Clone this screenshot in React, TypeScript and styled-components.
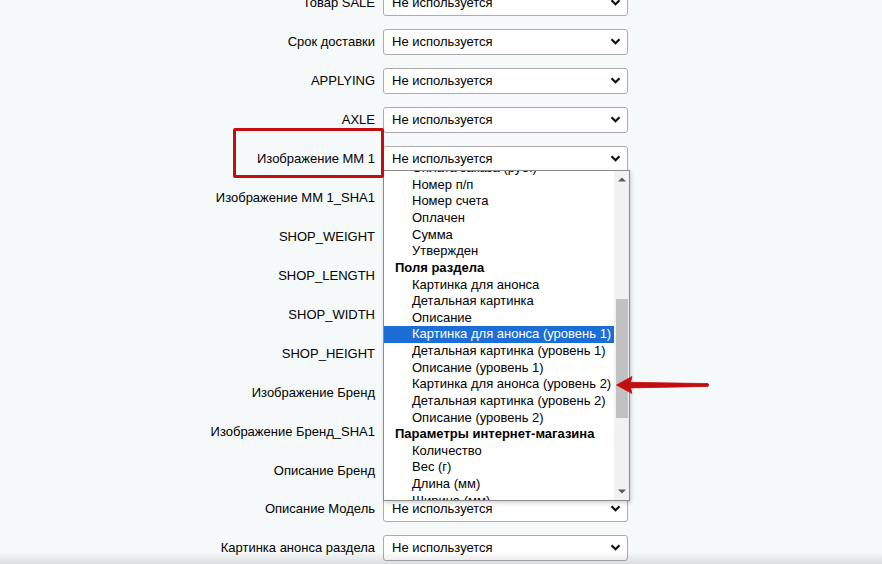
import styled, { createGlobalStyle } from "styled-components";

const GlobalStyle = createGlobalStyle`
  html, body {
    margin: 0;
    padding: 0;
  }
  body {
    background: #f5f9fa;
    font-family: "Liberation Sans", Arial, sans-serif;
    font-size: 13px;
    color: #000;
  }
`;

const fields = [
  "Товар SALE",
  "Срок доставки",
  "APPLYING",
  "AXLE",
  "Изображение MM 1",
  "Изображение MM 1_SHA1",
  "SHOP_WEIGHT",
  "SHOP_LENGTH",
  "SHOP_WIDTH",
  "SHOP_HEIGHT",
  "Изображение Бренд",
  "Изображение Бренд_SHA1",
  "Описание Бренд",
  "Описание Модель",
  "Картинка анонса раздела",
];

type Item = { text: string; group?: boolean; selected?: boolean };

const items: Item[] = [
  { text: "Оплата заказа (руб.)" },
  { text: "Номер п/п" },
  { text: "Номер счета" },
  { text: "Оплачен" },
  { text: "Сумма" },
  { text: "Утвержден" },
  { text: "Поля раздела", group: true },
  { text: "Картинка для анонса" },
  { text: "Детальная картинка" },
  { text: "Описание" },
  { text: "Картинка для анонса (уровень 1)", selected: true },
  { text: "Детальная картинка (уровень 1)" },
  { text: "Описание (уровень 1)" },
  { text: "Картинка для анонса (уровень 2)" },
  { text: "Детальная картинка (уровень 2)" },
  { text: "Описание (уровень 2)" },
  { text: "Параметры интернет-магазина", group: true },
  { text: "Количество" },
  { text: "Вес (г)" },
  { text: "Длина (мм)" },
  { text: "Ширина (мм)" },
  { text: "Высота (мм)" },
];

const OPEN_FIELD = "Изображение MM 1";

const Page = styled.div`
  position: relative;
  height: 564px;
  overflow: hidden;

  &::after {
    content: "";
    position: absolute;
    left: 0;
    right: 0;
    bottom: 0;
    height: 12px;
    background: linear-gradient(rgba(0, 0, 0, 0), rgba(0, 0, 0, 0.11));
    pointer-events: none;
  }
`;

const Form = styled.div`
  display: flex;
  flex-direction: column;
  margin-top: -16.5px;
`;

const Row = styled.div`
  position: relative;
  display: grid;
  grid-template-columns: 375px 245px;
  column-gap: 8px;
  align-items: center;
  height: 38.93px;
`;

const Label = styled.div`
  text-align: right;
  white-space: nowrap;
`;

const SelectBox = styled.div<{ $open?: boolean }>`
  position: relative;
  z-index: ${(p) => (p.$open ? 5 : "auto")};
  display: flex;
  align-items: center;
  justify-content: space-between;
  box-sizing: border-box;
  height: 26px;
  padding: 0 6px 0 8px;
  background: #fff;
  border: 1px solid #ababab;
  border-radius: 3px;
`;

const Highlight = styled.div`
  position: absolute;
  left: 233px;
  top: -11px;
  width: 151px;
  height: 50px;
  box-sizing: border-box;
  border: 3px solid #c20e0e;
  border-radius: 2px;
  z-index: 6;
  pointer-events: none;
`;

const Popup = styled.div`
  position: absolute;
  top: calc(100% - 0.5px);
  left: -1px;
  width: 247px;
`;

const ListBox = styled.div`
  display: flex;
  box-sizing: border-box;
  height: 331px;
  background: #fff;
  border: 1px solid #8c8c8c;
  box-shadow: 1px 2px 4px rgba(0, 0, 0, 0.18);
`;

const Options = styled.div`
  flex: 1;
  overflow: hidden;
`;

const OptionList = styled.div`
  margin-top: -11px;
`;

const Option = styled.div<{ $group?: boolean; $selected?: boolean }>`
  height: 16.64px;
  line-height: 16.64px;
  white-space: nowrap;
  padding-left: ${(p) => (p.$group ? "11px" : "28px")};
  font-weight: ${(p) => (p.$group ? 700 : 400)};
  background: ${(p) => (p.$selected ? "#1c6dd5" : "transparent")};
  color: ${(p) => (p.$selected ? "#fff" : "#000")};
`;

const Scrollbar = styled.div`
  display: flex;
  flex-direction: column;
  width: 15px;
  background: #f1f1f1;
`;

const ScrollButton = styled.div`
  display: flex;
  align-items: center;
  justify-content: center;
  height: 17px;
`;

const Track = styled.div`
  flex: 1;
`;

const Thumb = styled.div`
  width: 12px;
  height: 119px;
  margin: 110.5px auto 0;
  background: #c1c1c1;
`;

const Pointer = styled.svg`
  position: absolute;
  left: 233px;
  top: 205px;
  z-index: 7;
`;

const Chevron = () => (
  <svg width="11" height="7" viewBox="0 0 11 7">
    <path d="M1.5 1.3 L5.5 5.2 L9.5 1.3" fill="none" stroke="#111" strokeWidth="2.2" />
  </svg>
);

const Triangle = ({ down }: { down?: boolean }) => (
  <svg width="8" height="5" viewBox="0 0 8 5">
    <path d={down ? "M0 0.5 H8 L4 4.5 Z" : "M0 4.5 H8 L4 0.5 Z"} fill="#5a5a5a" />
  </svg>
);

const Dropdown = () => (
  <Popup>
    <ListBox>
      <Options>
        <OptionList>
          {items.map((it) => (
            <Option key={it.text} $group={it.group} $selected={it.selected}>
              {it.text}
            </Option>
          ))}
        </OptionList>
      </Options>
      <Scrollbar>
        <ScrollButton>
          <Triangle />
        </ScrollButton>
        <Track>
          <Thumb />
        </Track>
        <ScrollButton>
          <Triangle down />
        </ScrollButton>
      </Scrollbar>
    </ListBox>
    <Pointer width="96" height="20" viewBox="0 0 96 20">
      <path
        d="M0.5 10 L16 1.5 L14.5 7.3 L92 8.6 Q93.8 10 92 11.4 L14.5 12.9 L16 18.5 Z"
        fill="#c20e0e"
        stroke="#c20e0e"
        strokeWidth="0.8"
        strokeLinejoin="round"
      />
    </Pointer>
  </Popup>
);

const App = () => {
  return (
    <Page>
      <GlobalStyle />
      <Form>
        {fields.map((name) => {
          const open = name === OPEN_FIELD;
          return (
            <Row key={name}>
              <Label>{name}</Label>
              <SelectBox $open={open}>
                <span>Не используется</span>
                <Chevron />
                {open && <Dropdown />}
              </SelectBox>
              {open && <Highlight />}
            </Row>
          );
        })}
      </Form>
    </Page>
  );
};

export default App;
